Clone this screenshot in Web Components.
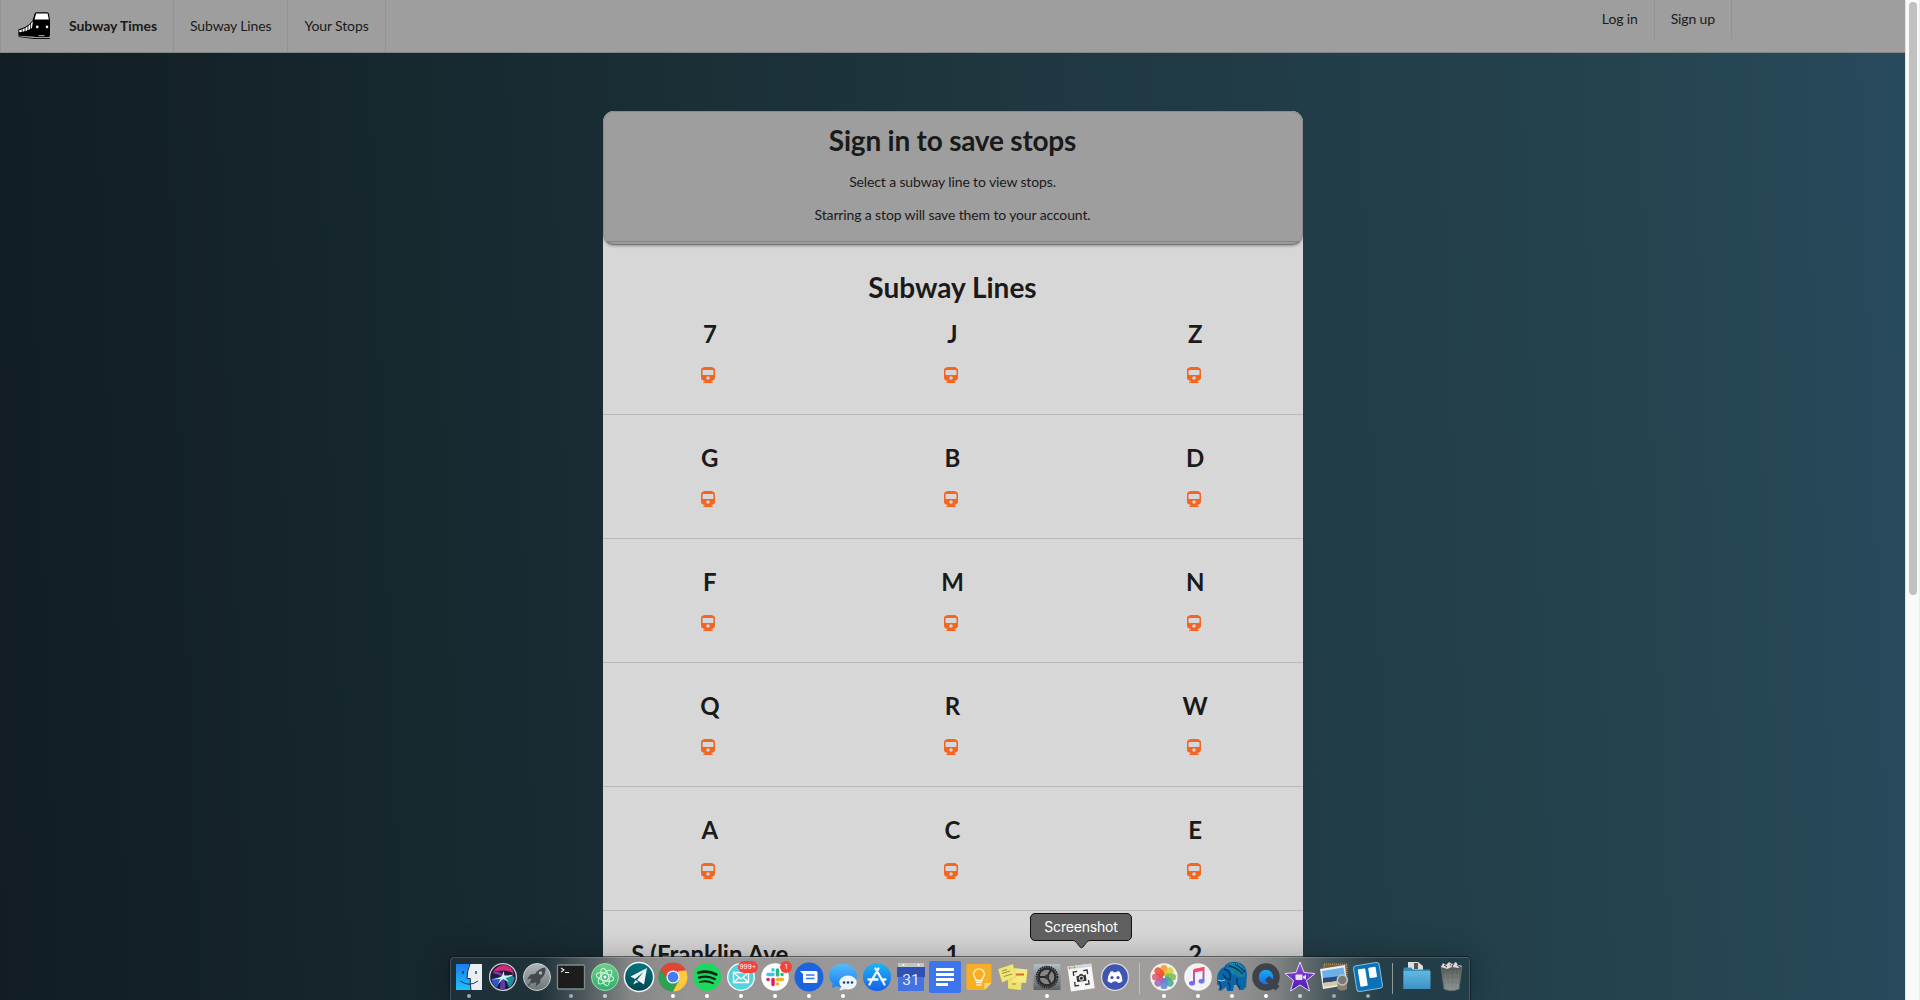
<!DOCTYPE html>
<html lang="en">
<head>
<meta charset="utf-8">
<title>Subway Times</title>
<style>
html,body{margin:0;height:1000px;overflow:hidden}
body{font-family:Lato,"Liberation Sans",sans-serif;font-size:14px;line-height:20px;color:#1a1a1a}
</style>
</head>
<body>
<subway-app></subway-app>
<script>
const define=(name,html,init)=>customElements.define(name,class extends HTMLElement{
  constructor(){super();this.attachShadow({mode:'open'}).innerHTML=typeof html==='function'?'':html;this._h=html;}
  connectedCallback(){if(typeof this._h==='function')this.shadowRoot.innerHTML=this._h(this);if(init)init(this);}
});

define('nav-item',`<style>
:host{display:flex;align-items:center;padding:0 16px;border-right:1px solid #929292;box-sizing:border-box;white-space:nowrap;letter-spacing:-.13px}
</style><slot></slot>`);

define('train-logo',`<style>:host{display:block;width:33px;height:28px}svg{display:block}</style>
<svg width="33" height="28" viewBox="0 0 33 28">
<path d="M14.500 8.500C11 13.500 6 16 .4 17.400V23.800L15 24.600 17.500 25H30.500Q32 24.700 32 23V8.500L31 2Q30.700.3 29 .3H18.500Q17 .3 16.500 2Z" fill="#000"/>
<path d="M18.200 1.600H29.600L30.800 7.400H16.500Z" fill="#fff"/>
<path d="M14.900 9.300C11 14.500 6 17 1.300 18.300V20.300C6 19.600 11 18.300 14 16Z" fill="#fff"/>
<path d="M12.600 11V18M9.900 13V19M7 15V20M4.200 16V21" stroke="#000" stroke-width=".8"/>
<circle cx="19.300" cy="14.900" r="1.300" fill="#fff"/><circle cx="29" cy="14.900" r="1.300" fill="#fff"/>
<path d="M.4 24.200 15 26H32V27H16L.4 25Z" fill="#111"/><path d="M20.500 23h6v1.200h-6Z" fill="#999"/></svg>`);

define('top-bar',`<style>
:host{display:flex;justify-content:space-between;align-items:flex-start;height:53px;box-sizing:border-box;background:#9e9e9e;border-bottom:1px solid #858585;border-left:1px solid #929292}
.l{display:flex;height:52px}.r{display:flex;height:39px;margin-right:173px}
.r nav-item{padding-bottom:2px}
.brand{display:flex;align-items:center;box-sizing:border-box;width:173px;border-right:1px solid #929292;padding-left:17px;gap:18px}
b{font-weight:700;letter-spacing:-.05px}
</style>
<div class="l"><div class="brand"><train-logo></train-logo><b>Subway Times</b></div><nav-item>Subway Lines</nav-item><nav-item>Your Stops</nav-item></div>
<div class="r"><nav-item>Log in</nav-item><nav-item>Sign up</nav-item></div>`);

define('sign-banner',`<style>
:host{display:block;height:134px;box-sizing:border-box;background:linear-gradient(#9e9e9e 129px,#858585 129px,#858585 130px,#9b9b9b 130px);border:1px solid #8a8a8a;border-bottom-color:#777;border-radius:11px;text-align:center;padding-top:10px;box-shadow:0 1px 3px #0005}
h2{font-size:28px;line-height:36px;margin:0 0 14px;font-weight:700;letter-spacing:-.22px}
p{margin:0 0 13px;line-height:20px;letter-spacing:-.13px}
</style><h2>Sign in to save stops</h2><p>Select a subway line to view stops.</p><p>Starring a stop will save them to your account.</p>`);

define('line-cell',`<style>
:host{display:flex;flex-direction:column;align-items:center;flex:1;text-align:center}
h3{margin:0;font-size:24px;line-height:31px;font-weight:700}
svg{display:block;margin:18px 3px 0 0}
</style><h3><slot></slot></h3>
<svg width="14" height="16" viewBox="0 0 448 512"><path fill="#f26522" d="M448 96v256c0 51.8-61.6 96-130 96l63 49.8c6 4.7 2.7 14.2-5 14.2H72c-7.700 0-11-9.500-5-14.200L130 448C61.800 448 0 403.900 0 352V96C0 43 64 0 128 0h192c65 0 128 43 128 96zm-48 136V120c0-13.300-10.700-24-24-24H72c-13.300 0-24 10.700-24 24v112c0 13.300 10.700 24 24 24h304c13.300 0 24-10.700 24-24zm-176 64c-31 0-56 25-56 56s25 56 56 56 56-25 56-56-25-56-56-56z"/></svg>`);

define('line-row',el=>`<style>
:host{display:block;height:124px;flex:none;box-sizing:border-box;border-bottom:1px solid #b9b9b9}
.g{display:flex;margin:0 -14px;padding-top:27px}
:host(:first-of-type){height:97px}:host(:first-of-type) .g{padding-top:0}
</style><div class="g">${el.getAttribute('lines').split('|').map(t=>`<line-cell>${t}</line-cell>`).join('')}</div>`);

define('lines-panel',`<style>
:host{display:flex;flex-direction:column;width:700px;height:846px;overflow:hidden;margin:58px auto 0;background:#d7d7d7;border-radius:11px 11px 0 0}
h2{margin:24px 0 13px;font-size:28px;line-height:36px;text-align:center;font-weight:700;flex:none}
sign-banner{flex:none}
</style><sign-banner></sign-banner><h2>Subway Lines</h2>
<line-row lines="7|J|Z"></line-row><line-row lines="G|B|D"></line-row><line-row lines="F|M|N"></line-row><line-row lines="Q|R|W"></line-row><line-row lines="A|C|E"></line-row><line-row lines="S (Franklin Ave|1|2"></line-row>`);

define('scroll-bar',`<style>
:host{display:flex;width:15px;box-sizing:border-box;height:1000px;background:#fafafa;border-left:1px solid #e4e4e4;border-right:1px solid #ededed;padding:2px 2px 0 3px}
div{width:8px;height:593px;border-radius:4px;background:#c1c1c1}
</style><div></div>`);

const art={
finder:`<path d="M4 4H30V30H4Z" fill="#1d9bf6"/><path d="M4 4H18Q15 11 15 18H18.500V30H4Z" fill="url(#fb)"/><path d="M18 4H30V30H19Q18 24 18.300 18.500H15Q15 10 18 4Z" fill="#e9eef5"/><path d="M11 11v3M24 11v3" stroke="#17324d" stroke-width="1.300"/><path d="M8.500 21Q17 27.500 26 21M18 4Q15 11 15 18.500H18.300Q18 24 19 30" fill="none" stroke="#17324d"/>`,
siri:`<circle cx="17" cy="17" r="13.400" fill="#1d1a3c" stroke="#d4d4d4" stroke-width="1.200"/><path d="M7 12Q11 5 18 5Q26 6 28 14Q20 8 7 12Z" fill="#d02c78"/><path d="M6 13Q15 9 17 17Q12 14 6 13Z" fill="#7a3aa8"/><path d="M5.500 19Q11 17 17 17Q13 23 11 27.500Q6 25 5.500 19Z" fill="#2f55c4"/><path d="M17 17Q24 14 28.500 17Q28 24 23 27.500Q21 21 17 17Z" fill="#1f8f9f"/><path d="M17 17Q20 22 19 29H14Q14 22 17 17Z" fill="#5b3f9f"/><path d="M5.500 19.500Q13 18 16 16L17.500 11 18.500 15.500Q23 15.500 28 14.500Q23 17.500 19.500 18L23 22 17 19 12 24 14.500 19Q10 19 5.500 19.500Z" fill="#c5f5f7"/>`,
launch:`<circle cx="17" cy="17" r="13.500" fill="url(#gr)" stroke="#c9ced1"/><path d="M25.500 7.500Q19 8 15 14L10.500 14.500 7 19.500 11.500 18.500 10 22 12.500 23.500 16.500 22 15.500 26.500 20 23 20.500 19Q26 15 25.500 7.500Z" fill="#43494c"/><circle cx="20.500" cy="13" r="1.800" fill="#aab1b5"/><path d="M8 26 11.500 22" stroke="#555" stroke-width="1.500"/>`,
term:`<rect x="3.500" y="5" width="27" height="24" rx="1" fill="#1c1c1c" stroke="#7e8c8e" stroke-width="1.300"/><path d="M7 8l3 2-3 2M11 12.500h4" stroke="#eee" fill="none" stroke-width="1.100"/>`,
atom:`<circle cx="17" cy="17" r="13.500" fill="url(#gn)" stroke="#a7d5b9"/><g fill="none" stroke="#ddfae5" stroke-width="1"><ellipse cx="17" cy="17" rx="9" ry="3.700" transform="rotate(15 17 17)"/><ellipse cx="17" cy="17" rx="9" ry="3.700" transform="rotate(75 17 17)"/><ellipse cx="17" cy="17" rx="9" ry="3.700" transform="rotate(135 17 17)"/></g><circle cx="17" cy="17" r="1.500" fill="#fff"/>`,
plane:`<circle cx="17" cy="17" r="14.600" fill="url(#te)" stroke="#f2f5f5" stroke-width="1.500"/><path d="M25 8 8.500 16.500 13 19 21.500 12 15 20 22 24.500Z" fill="#eef6f5"/><path d="M11 24.500 13.500 20 16.500 22Z" fill="#cfe3e3"/>`,
chrome:`<circle cx="17" cy="17" r="14.500" fill="#e4483b"/><path d="M4.500 9.700A14.500 14.500 0 0 0 17 31.500L23.200 20.500 17 17H10.800Z" fill="#2ca152"/><path d="M29.800 10A14.500 14.500 0 0 1 17 31.500L23 20.500 22 11Z" fill="#fcca3f"/><path d="M4.500 9.700A14.500 14.500 0 0 1 29.800 10.500H17L10.500 17Z" fill="#df4638"/><circle cx="17" cy="17" r="6.600" fill="#f4f4f4"/><circle cx="17" cy="17" r="5.300" fill="#437ef0"/>`,
spotify:`<circle cx="17" cy="17" r="14" fill="#1ed760"/><g fill="none" stroke="#0b2413" stroke-linecap="round"><path d="M8.300 12.800Q18 9.800 26.300 14.500" stroke-width="2.600"/><path d="M9 17.600Q17.500 15 24.800 19" stroke-width="2.200"/><path d="M9.800 22Q17 20 23 23.300" stroke-width="1.800"/></g>`,
mail:`<circle cx="17" cy="17" r="13.300" fill="#53d3dd" stroke="#fff" stroke-width="1.300"/><path d="M9.500 12.500h15v10h-15zM9.500 12.500 17 19 24.500 12.500M9.500 22.500 15 17.500M24.500 22.500 19 17.500" fill="none" stroke="#fff" stroke-width="1.300"/>`,
slack:`<circle cx="17" cy="17" r="13.800" fill="#fff"/><g stroke-width="3.500" stroke-linecap="round"><path d="M10 14.500h5M15 9.800v.1" stroke="#36c5f0"/><path d="M19.500 10v5M24 14.500h.1" stroke="#2eb67d"/><path d="M19.500 19.500h5M19.500 24v.1" stroke="#ecb22e"/><path d="M15 19.500v5M10 19.500h.1" stroke="#e01e5a"/></g>`,
amsg:`<circle cx="17" cy="17" r="14.500" fill="#1b63df"/><path d="M8 11H24Q25.500 11 25.500 12.500V21.500Q25.500 23 24 23H12.500Q11 23 11 21.500V14Z" fill="#fff"/><path d="M14 15h8.500M14 18.500h8.500" stroke="#3a74dd" stroke-width="1.500"/>`,
imsg:`<ellipse cx="17" cy="15.500" rx="14" ry="11.800" fill="url(#bl)"/><path d="M7 23 5.500 28 12 26Z" fill="#2689f4"/><ellipse cx="22" cy="22.500" rx="8.700" ry="7" fill="#edf4fb"/><path d="M15 27 13.500 30.500 20 29Z" fill="#e6eef6"/><g fill="#174a80"><circle cx="18" cy="22.500" r="1.300"/><circle cx="22" cy="22.500" r="1.300"/><circle cx="26" cy="22.500" r="1.300"/></g>`,
store:`<circle cx="17" cy="17" r="14" fill="url(#bl2)"/><path d="M18.500 8.500 10.500 22.500M15.500 8.500 23.500 22.500M8.500 19.500H17.500M21.500 19.500H25.500M9.500 24.500 10 23.700M24.500 24.500 24 23.700" stroke="#f4faff" stroke-width="2.300" stroke-linecap="round"/>`,
cal:`<path d="M4 3H30V9H4Z" fill="#c5c5c5"/><path d="M3 7H31V17H3Z" fill="#2e51b4"/><path d="M4 17H30V31H4Z" fill="#4272e4"/><circle cx="9.500" cy="5" r="1" fill="#fff"/><circle cx="24.500" cy="5" r="1" fill="#fff"/><text x="17" y="24.500" text-anchor="middle" font-family="Roboto,sans-serif" font-size="15.500" fill="#e3eafb">31</text>`,
docs:`<rect x="1" y="1" width="32" height="32" rx="2" fill="#3c75ee"/><path d="M8 9.500H26M8 14.500H26M8 19.500H26M8 24.500H20" stroke="#fff" stroke-width="3"/>`,
keep:`<path d="M6 4H28Q29.500 4 29.500 5.500V23L22.500 30H6Q4.500 30 4.500 28.500V5.500Q4.500 4 6 4Z" fill="#f5b025"/><path d="M29.500 23H22.500V30Z" fill="#ffd970"/><path d="M14 20.500Q14 18.500 12.700 17.200A5.300 5.300 0 1 1 21.300 17.200Q20 18.500 20 20.500ZM14 22.500H20M14.500 25H19.500" fill="none" stroke="#fff4d2" stroke-width="1.300"/>`,
notes:`<path d="M12 18 26 19 25 30 12 28.500Z" fill="#eee06c"/><path d="M17 8 31.500 9.500 30 23 16 21.500Z" fill="#f7ea7c"/><path d="M2 9 17 4 20 17 6 22.500Z" fill="#f0e675" stroke="#b9ae50" stroke-width=".3"/><path d="M6 11 11 9.500M6 13.500 14 11M8 16.500 16 14M16 24h4" stroke="#83783a" stroke-width=".8"/><path d="M20 14.500H28" stroke="#d56937" stroke-width="2"/>`,
gear:`<rect x="3.500" y="4" width="27" height="26" rx="1" fill="url(#st)"/><circle cx="17" cy="17" r="10.500" fill="#777" stroke="#222" stroke-width="1.700" stroke-dasharray="1.500 .8"/><circle cx="17" cy="17" r="8.500" fill="#858585" stroke="#2a2a2a" stroke-width="2.400"/><path d="M17 17H9M17 17 21 10M17 17 21 24" stroke="#2b2b2b" stroke-width="2"/><circle cx="17" cy="17" r="2.300" fill="#333"/>`,
shot:`<g transform="rotate(-8 17 17)"><rect x="5" y="5" width="24" height="25" fill="#f6f6f6"/><path d="M5 5H29V8H5Z" fill="#d2d7d5"/><circle cx="7" cy="6.500" r=".8" fill="#e44"/><circle cx="9.500" cy="6.500" r=".8" fill="#da3"/><circle cx="12" cy="6.500" r=".8" fill="#3b4"/><path d="M10 15V11H14M20 11H24V15M24 21V25H20M14 25H10V21" fill="none" stroke="#333" stroke-width="1.300"/><path d="M12.500 15.500H15L16 14H18.500L19.500 15.500H22V21.500H12.500Z" fill="#333"/><circle cx="17.200" cy="18.300" r="2" fill="none" stroke="#ddd"/></g>`,
discord:`<circle cx="17" cy="17" r="13.400" fill="#4054b2" stroke="#ddd" stroke-width="1.200"/><path d="M12.500 11.500 15 11.200 15.500 12.200H18.500L19 11.200 21.500 11.500Q24.500 16 24.500 21 22.500 23 20 23L19 21.500H15L14 23Q11.500 23 9.500 21 9.500 16 12.500 11.500Z" fill="#fff"/><circle cx="14" cy="17.600" r="1.600" fill="#4054b2"/><circle cx="20" cy="17.600" r="1.600" fill="#4054b2"/>`,
photos:`<circle cx="17" cy="17" r="13.700" fill="#f3f1ec"/>`+['#f59a23','#d6cf35','#77bd54','#41a99b','#5689d5','#9969b8','#d65b7c','#f04b37'].map((c,i)=>`<rect x="13.400" y="5" width="7.200" height="11" rx="3.600" fill="${c}" opacity=".86" transform="rotate(${i*45} 17 17)"/>`).join(''),
music:`<circle cx="17" cy="17" r="13.800" fill="#f3f3f7"/><path d="M13 10 22.500 8V20.500M13 10V23" fill="none" stroke="url(#mu)" stroke-width="2"/><path d="M13 11 22.500 9" stroke="#f54b68" stroke-width="3"/><ellipse cx="11" cy="23.300" rx="3" ry="2.300" fill="#746bf2"/><ellipse cx="20.500" cy="21.300" rx="3" ry="2.300" fill="#6679ef"/>`,
eleph:`<path d="M2 24Q1 10 9 7Q13 1 22 2Q32 4 32 15L31 27 28 30H24L23 25H19L18 31H12L11 27 6 31 3 30 5 27Z" fill="#0b66a8"/><path d="M13 5Q20 0 27 6Q31 11 30 17Q22 18 17 12Z" fill="#137f9f"/><path d="M14 6Q21 7 28 14M19 3Q25 7 30 12M9 9Q17 11 15 20Q10 19 8 14M4 21Q7 26 5 29M22 18Q21 25 25 28M13 22Q16 26 14 30" fill="none" stroke="#06355e" stroke-width="1.300"/><path d="M15 4Q23 2 29 9M12 8Q16 8 18 14" fill="none" stroke="#37b6c7" stroke-dasharray="1 1"/><path d="M3 20Q6 22 10 20" stroke="#9fd7eb" fill="none"/>`,
qt:`<circle cx="17" cy="17" r="10.500" fill="url(#bl2)" stroke="#3d424b" stroke-width="6.500"/><path d="M18 18 28.500 28.500" stroke="#3d424b" stroke-width="6"/>`,
imovie:`<path d="M17 2 21 12.500 32 13.500 23.500 20.500 26.500 31 17 25 7.500 31 10.500 20.500 2 13.500 13 12.500Z" fill="url(#pu)" stroke="#e1d9ed"/><rect x="12.500" y="14.500" width="7" height="5.500" rx="1" fill="#eadff7"/><path d="M20 16.500 23 14.800V19.800L20 18Z" fill="#eadff7"/>`,
preview:`<path d="M7 4H30V23H7Z" fill="#796342" stroke="#c3a36d" stroke-dasharray="1 1"/><path d="M3 9 28 5 30 25 6 29Z" fill="#eee"/><path d="M5 11 26.500 7.500 28 16 6 19Z" fill="#6dafe8"/><path d="M6 18 28 15.500 29 20 6 23Z" fill="#294a7a"/><path d="M6 23 29 20 29 24 7 27Z" fill="#d7c7a8"/><path d="M20.500 22H30V29Q25 32 20.500 29Z" fill="#8a8072"/><circle cx="25.300" cy="20" r="5" fill="#777b7c" stroke="#c4c2ba" stroke-width="1.500"/>`,
trello:`<g transform="rotate(-9 17 17)"><rect x="4" y="4" width="26" height="26" rx="3" fill="#0873b8" stroke="#8cb9d4"/><rect x="8" y="8" width="7.500" height="17.500" rx="1" fill="#fff"/><rect x="18.500" y="8" width="7.500" height="10.500" rx="1" fill="#fff"/></g>`,
folder:`<path d="M8 2H18L23 6V16H8Z" fill="#dedede"/><path d="M14 3H18V9H14Z" fill="#555"/><path d="M3.500 9Q3.500 7.500 5 7.500H11L13 9.500H30V29H3.500Z" fill="#328dbf"/><path d="M3.500 11H30.500V29H3.500Z" fill="url(#fo)"/>`,
trash:`<path d="M7 6H28L25 29Q17 32.500 10 29Z" fill="url(#tr)" stroke="#656969"/><path d="M7 7 9 3 12 5 15 2 18 4 22 2 24 5 28 6 24 8 18 7 13 9Z" fill="#d8dad8"/><path d="M10 5 13 7M20 3 18 7M23 5 26 7" stroke="#333"/><path d="M16 4 17 6" stroke="#c33"/><path d="M11 11 13 29M16 10V30M21 10 20 30M25 10 23 29M9 15H26M10 20H25M10 25H25" stroke="#c8caca" stroke-width=".3" opacity=".4"/>`
};
const lg=(id,a,b)=>`<linearGradient id="${id}" x1="0" y1="0" x2="0" y2="1"><stop stop-color="${a}"/><stop offset="1" stop-color="${b}"/></linearGradient>`;
const defs=`<defs>${lg('fb','#1c7dee','#20c0fb')}${lg('gr','#aeb7bb','#6d7477')}${lg('gn','#6bd084','#2fae72')}${lg('bl','#54bdfb','#1b7df1')}${lg('bl2','#1cb6f7','#1560e8')}${lg('st','#b3bec5','#596167')}${lg('mu','#f54b68','#7468f1')}${lg('pu','#9b4ae0','#4b16b4')}${lg('fo','#63b8e2','#3b92c5')}${lg('tr','#4f5455','#8d9192')}${lg('te','#037782','#01444f')}</defs>`;

define('dock-icon',el=>`<style>
:host{display:flex;flex-direction:column;align-items:center;width:34px;flex:none;position:relative}
svg{display:block}i{width:4px;height:4px;border-radius:2px;background:var(--dot,#fff)}
b{position:absolute;top:1px;right:0;height:12px;min-width:12px;box-sizing:border-box;padding:0 2px;border-radius:6px;background:#f8403c;color:#fff;font:6.500px/12px Inter,sans-serif;text-align:center}
</style><svg width="34" height="34" viewBox="0 0 34 34">${defs}${art[el.getAttribute('name')]}</svg>${el.hasAttribute('run')?'<i></i>':''}${el.hasAttribute('badge')?`<b>${el.getAttribute('badge')}</b>`:''}`);

define('dock-rule',`<style>:host{display:flex;justify-content:center;width:15px;padding-top:3px}div{width:1px;height:31px;background:#d0d0d0a0}</style><div></div>`);

define('dock-tip',`<style>
:host{display:flex;align-items:center;justify-content:center;width:102px;height:28px;box-sizing:border-box;position:absolute;left:581px;top:-43px;background:#5f5f5f;border:1px solid #111;border-radius:5px;color:#fff;font:14px/26px Inter,"Liberation Sans",sans-serif;letter-spacing:-.18px}
svg{position:absolute;left:42px;top:25px}
</style><slot></slot><svg width="17" height="11" viewBox="0 0 17 11"><path d="M0 0V1.500Q2 1.500 3.500 3.500L7 8Q8.500 9.500 10 8L13.500 3.500Q15 1.500 17 1.500V0Z" fill="#5f5f5f"/><path d="M0 1.500Q2 1.500 3.500 3.500L7 8Q8.500 9.500 10 8L13.500 3.500Q15 1.500 17 1.500" fill="none" stroke="#222"/></svg>`);

define('mac-dock',`<style>
:host{display:block;position:absolute;left:449px;top:956px;width:1022px;height:44px}
.bar{position:relative;display:flex;height:44px;box-sizing:border-box;border:1px solid #0a1216a0;border-bottom:0;border-radius:5px 5px 0 0;padding:3px 2px 0;box-shadow:inset 1px 1px 0 #ffffff2c,inset -1px 0 0 #ffffff2c,0 0 30px #0004}
.glass{position:absolute;inset:1px 1px 0;border-radius:5px 5px 0 0;background:linear-gradient(90deg,#1d2f37 0,#1f3139 90px,#4a5559 130px,#858686 180px,#969594 240px,#9d9a99 500px,#a19d9b 720px,#969594 780px,#7c8080 830px,#4b5a5f 875px,#253e48 930px,#213d49)}
.dim{--dot:#9eabaf}.mid{--dot:#ccd2d3}
</style><div class="glass"></div><div class="bar">
<dock-icon class="dim" name="finder" run></dock-icon><dock-icon name="siri"></dock-icon><dock-icon name="launch"></dock-icon><dock-icon class="dim" name="term" run></dock-icon><dock-icon class="mid" name="atom" run></dock-icon><dock-icon name="plane"></dock-icon><dock-icon name="chrome" run></dock-icon><dock-icon name="spotify" run></dock-icon><dock-icon name="mail" run badge="999+"></dock-icon><dock-icon name="slack" run badge="1"></dock-icon><dock-icon name="amsg" run></dock-icon><dock-icon name="imsg" run></dock-icon><dock-icon name="store"></dock-icon><dock-icon name="cal"></dock-icon><dock-icon name="docs"></dock-icon><dock-icon name="keep"></dock-icon><dock-icon name="notes"></dock-icon><dock-icon name="gear" run></dock-icon><dock-icon name="shot"></dock-icon><dock-icon name="discord"></dock-icon><dock-rule></dock-rule><dock-icon name="photos" run></dock-icon><dock-icon name="music" run></dock-icon><dock-icon name="eleph" run></dock-icon><dock-icon name="qt" run></dock-icon><dock-icon class="mid" name="imovie" run></dock-icon><dock-icon class="dim" name="preview" run></dock-icon><dock-icon class="dim" name="trello" run></dock-icon><dock-rule></dock-rule><dock-icon name="folder"></dock-icon><dock-icon name="trash"></dock-icon>
</div><dock-tip>Screenshot</dock-tip>`);

define('subway-app',`<style>
:host{display:flex;width:1920px;height:1000px;overflow:hidden;position:relative}
.page{width:1905px;height:1000px;background:linear-gradient(88deg,#111d22,#1f3740 54%,#24434e 84%,#284a5d)}
</style><div class="page"><top-bar></top-bar><lines-panel></lines-panel></div><scroll-bar></scroll-bar><mac-dock></mac-dock>`);
</script>
</body>
</html>
